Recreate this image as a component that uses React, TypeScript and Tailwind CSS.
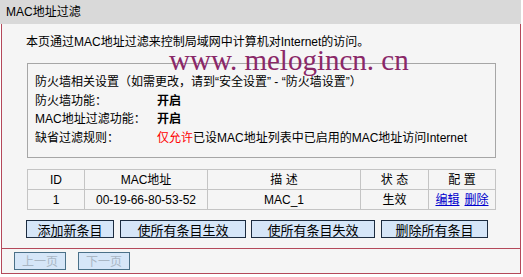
const font = { fontFamily: '"Liberation Sans", "Noto Sans CJK SC", sans-serif' }

const columns = [
  { label: "ID", width: "w-[57px]" },
  { label: "MAC地址", width: "w-[123px]" },
  { label: "描 述", width: "w-[153px]" },
  { label: "状 态", width: "w-[68px]" },
  { label: "配 置", width: "w-[67px]" },
]

const rules = [
  { name: "防火墙功能：", value: "开启" },
  { name: "MAC地址过滤功能：", value: "开启" },
]

export default function App() {
  return (
    <div className="w-[523px] h-[277px] bg-white text-[12px] text-black" style={font}>
      {/* Title */}
      <div className="w-[521px] h-[24px] bg-[#d9d9d9] flex items-center pl-[6px]">MAC地址过滤</div>

      {/* Frame */}
      <div className="relative ml-[1px] w-[520px] h-[250px] border-x border-b border-[#b4485a] bg-[#f5f5f5] flex flex-col">
        <div className="h-[12px]" />
        <div className="pl-[24px] leading-[12px]">本页通过MAC地址过滤来控制局域网中计算机对Internet的访问。</div>

        <div className="mt-[15px] ml-[25px] w-[469px] h-[95px] border border-[#a6a6a6] pt-[9px] pl-[7px] leading-[18.5px]">
          <div>防火墙相关设置（如需更改，请到“安全设置” - “防火墙设置”）</div>
          {rules.map((r) => (
            <div key={r.name} className="flex">
              <span className="w-[122px]">{r.name}</span>
              <span className="font-bold">{r.value}</span>
            </div>
          ))}
          <div className="flex">
            <span className="w-[122px]">缺省过滤规则：</span>
            <span>
              <span className="text-[#ff0000]">仅允许</span>已设MAC地址列表中已启用的MAC地址访问Internet
            </span>
          </div>
        </div>

        {/* Table */}
        <div className="mt-[11px] ml-[25px] w-[469px] border-l border-t border-[#c4c4c4]">
          <div className="flex h-[20px]">
            {columns.map((c) => (
              <div key={c.label} className={`${c.width} border-r border-b border-[#c4c4c4] flex items-center justify-center`}>
                {c.label}
              </div>
            ))}
          </div>
          <div className="flex h-[20px]">
            <div className="w-[57px] border-r border-b border-[#c4c4c4] flex items-center justify-center">1</div>
            <div className="w-[123px] border-r border-b border-[#c4c4c4] flex items-center justify-center">00-19-66-80-53-52</div>
            <div className="w-[153px] border-r border-b border-[#c4c4c4] flex items-center justify-center">MAC_1</div>
            <div className="w-[68px] border-r border-b border-[#c4c4c4] flex items-center justify-center">生效</div>
            <div className="w-[67px] border-r border-b border-[#c4c4c4] flex items-center justify-center gap-[5px] text-[#0000cc]">
              <a className="underline">编辑</a>
              <a className="underline">删除</a>
            </div>
          </div>
        </div>

        {/* Actions */}
        <div className="mt-[10px] ml-[24px] flex h-[18px] text-[13px]">
          <button className="w-[88px] bg-[#d6e6f8] border border-[#1c2c40]">添加新条目</button>
          <button className="ml-[6px] w-[126px] bg-[#d6e6f8] border border-[#1c2c40]">使所有条目生效</button>
          <button className="ml-[5px] w-[124px] bg-[#d6e6f8] border border-[#1c2c40]">使所有条目失效</button>
          <button className="ml-[6px] w-[107px] bg-[#d6e6f8] border border-[#1c2c40]">删除所有条目</button>
        </div>

        <div className="mt-[10px] h-px bg-[#b4485a]" />

        <div className="mt-[3px] ml-[12px] flex gap-[12px] h-[18px] text-[12px]">
          <button className="w-[52px] bg-[#d6e6f8] border border-[#4a7088] text-[#a9b6c4]">上一页</button>
          <button className="w-[52px] bg-[#d6e6f8] border border-[#4a7088] text-[#a9b6c4]">下一页</button>
        </div>

        {/* Watermark */}
        <div
          className="absolute left-[167px] top-[26px] text-[29px] leading-[20px] text-[#8a2868]"
          style={{ fontFamily: '"Liberation Serif", serif' }}
        >
          www. melogincn. cn
        </div>
      </div>
    </div>
  )
}
